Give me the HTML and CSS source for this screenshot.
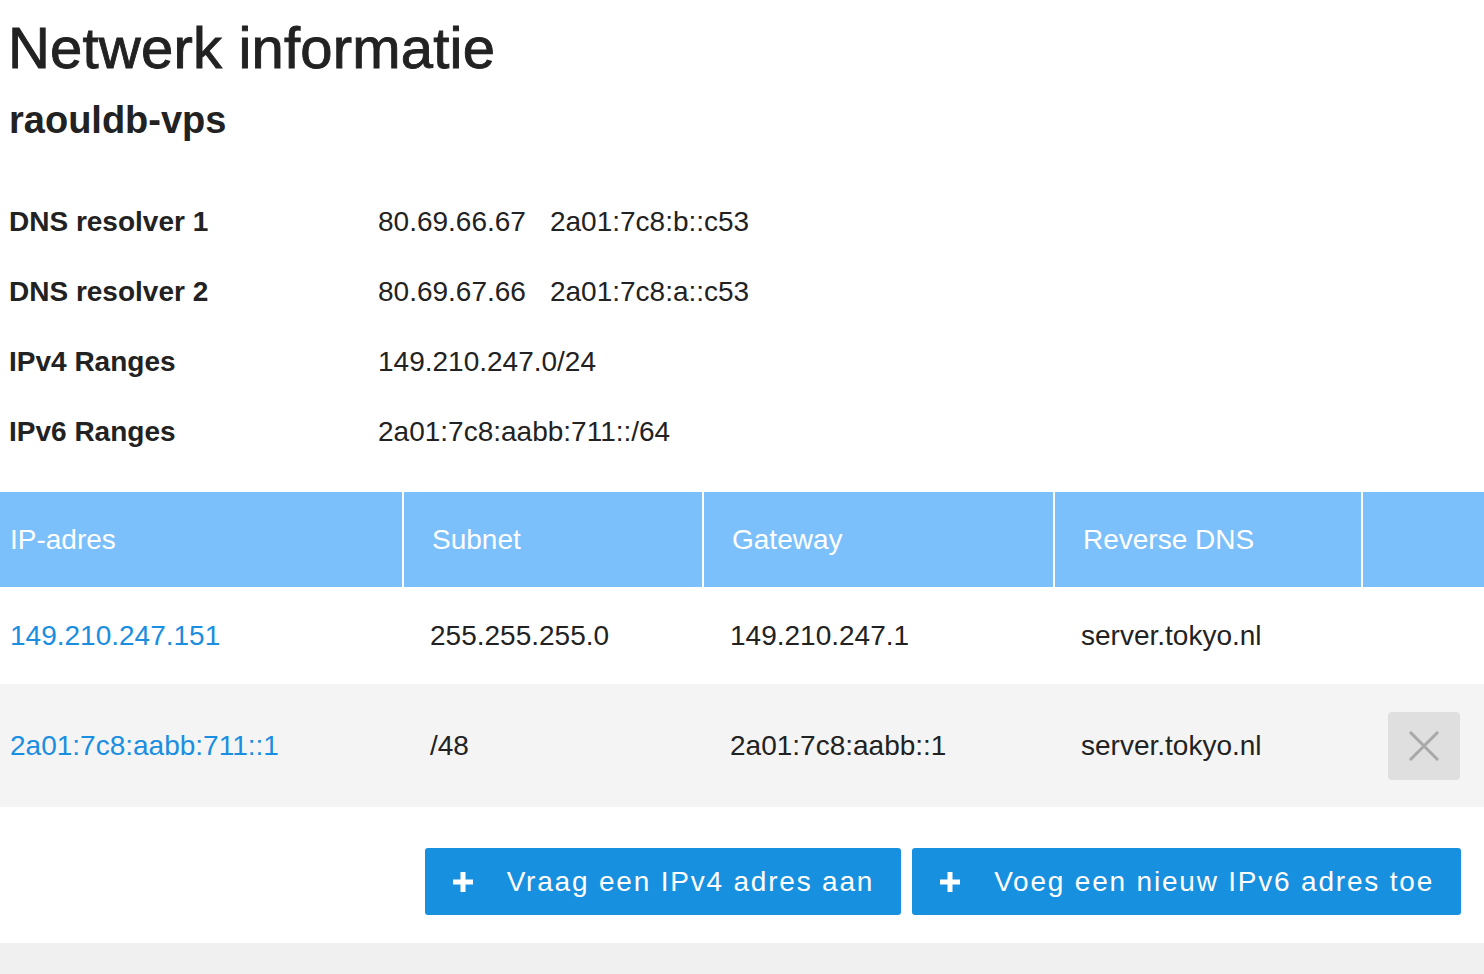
FILE: index.html
```html
<!DOCTYPE html>
<html lang="nl">
<head>
    <meta charset="UTF-8">
    <meta name="viewport" content="width=device-width, initial-scale=1.0">
    <title>Netwerk informatie</title>

    <link rel="stylesheet" href="styles.css">
</head>
<body>
    <div class="page">
        <h1>Netwerk informatie</h1>
        <h2>raouldb-vps</h2>

        <div class="info">
            <div class="info-row">
                <span class="label">DNS resolver 1</span>
                <span class="value"><span class="addr">80.69.66.67</span><span class="addr">2a01:7c8:b::c53</span></span>
            </div>
            <div class="info-row">
                <span class="label">DNS resolver 2</span>
                <span class="value"><span class="addr">80.69.67.66</span><span class="addr">2a01:7c8:a::c53</span></span>
            </div>
            <div class="info-row">
                <span class="label">IPv4 Ranges</span>
                <span class="value">149.210.247.0/24</span>
            </div>
            <div class="info-row">
                <span class="label">IPv6 Ranges</span>
                <span class="value">2a01:7c8:aabb:711::/64</span>
            </div>
        </div>

        <table class="ips">
            <thead>
                <tr>
                    <th class="col-ip">IP-adres</th>
                    <th class="col-subnet">Subnet</th>
                    <th class="col-gw">Gateway</th>
                    <th class="col-rdns">Reverse DNS</th>
                    <th class="col-act"></th>
                </tr>
            </thead>
            <tbody>
                <tr class="row1">
                    <td><a href="#">149.210.247.151</a></td>
                    <td>255.255.255.0</td>
                    <td>149.210.247.1</td>
                    <td>server.tokyo.nl</td>
                    <td></td>
                </tr>
                <tr class="row2">
                    <td><a href="#">2a01:7c8:aabb:711::1</a></td>
                    <td>/48</td>
                    <td>2a01:7c8:aabb::1</td>
                    <td>server.tokyo.nl</td>
                    <td>
                        <button class="delete" title="Verwijderen">
                            <svg width="32" height="30" viewBox="0 0 32 30">
                                <path d="M2 1 L30 29 M30 1 L2 29" stroke="#a9a9a9" stroke-width="3" fill="none"/>
                            </svg>
                        </button>
                    </td>
                </tr>
            </tbody>
        </table>

        <div class="actions">
            <button class="btn">
                <svg class="plus" width="20" height="20" viewBox="0 0 20 20">
                    <path d="M10 0 V20 M0 10 H20" stroke="#fff" stroke-width="5" fill="none"/>
                </svg>
                <span>Vraag een IPv4 adres aan</span>
            </button>
            <button class="btn">
                <svg class="plus" width="20" height="20" viewBox="0 0 20 20">
                    <path d="M10 0 V20 M0 10 H20" stroke="#fff" stroke-width="5" fill="none"/>
                </svg>
                <span>Voeg een nieuw IPv6 adres toe</span>
            </button>
        </div>
    </div>
</body>
</html>
```

FILE: styles.css
```css
*{
    font-family: "Liberation Sans", Arial, Helvetica, sans-serif;
    box-sizing: border-box;
}
body{
    margin: 0;
    background-color: #f0f0f0;
    color: #222;
}
.page{
    background-color: #fff;
    padding-top: 15px;
}
h1{
    margin: 0 0 0 8px;
    font-size: 58px;
    line-height: 65px;
    font-weight: normal;
    letter-spacing: 0.2px;
    -webkit-text-stroke: 0.9px #222;
}
h2{
    margin: 17px 0 0 9px;
    font-size: 38px;
    line-height: 46px;
    font-weight: bold;
}

.info{
    margin-top: 44px;
    padding-left: 9px;
}
.info-row{
    display: flex;
    height: 70px;
    line-height: 70px;
    font-size: 28px;
}
.label{
    width: 369px;
    font-weight: bold;
}
.addr{
    margin-right: 24px;
}

.ips{
    margin-top: 25px;
    width: 100%;
    border-collapse: separate;
    border-spacing: 0;
    table-layout: fixed;
    font-size: 28px;
}
.ips th{
    height: 95px;
    background-color: #7bbffb;
    color: #fff;
    font-weight: normal;
    text-align: left;
    padding: 0 0 0 28px;
    border-left: 2px solid #fff;
}
.ips th:first-child{
    border-left: none;
    padding-left: 10px;
}
.col-ip{ width: 402px; }
.col-subnet{ width: 300px; }
.col-gw{ width: 351px; }
.col-rdns{ width: 308px; }

.ips td{
    padding: 0 0 0 28px;
    white-space: nowrap;
}
.ips td:first-child{
    padding-left: 10px;
}
.ips a{
    color: #1a8ee0;
    text-decoration: none;
}
.row1 td{
    height: 97px;
}
.row2 td{
    height: 123px;
    background-color: #f4f4f4;
}
.row2 td:last-child{
    padding-left: 27px;
}
.delete{
    width: 72px;
    height: 68px;
    border: none;
    border-radius: 4px;
    background-color: #dfdfdf;
    display: flex;
    align-items: center;
    justify-content: center;
    padding: 0;
}

.actions{
    display: flex;
    justify-content: flex-end;
    gap: 11px;
    padding: 41px 23px 28px 0;
}
.btn{
    height: 67px;
    display: flex;
    align-items: center;
    border: none;
    border-radius: 3px;
    background-color: #1890e0;
    color: #fff;
    font-size: 28px;
    letter-spacing: 1.8px;
    padding: 0 27px 0 28px;
}
.plus{
    margin-right: 34px;
}
```
